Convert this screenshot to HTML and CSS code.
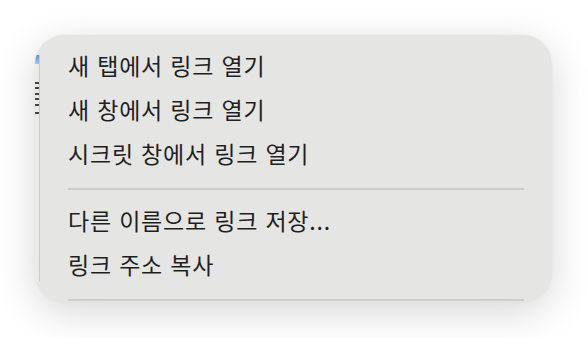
FILE: index.html
```html
<!DOCTYPE html>
<html lang="ko">
<head>
<meta charset="utf-8">
<link rel="stylesheet" href="styles.css">
</head>
<body>
<div class="stage">
  <div class="menu">
    <div class="edge">
      <span class="edge-blue"></span>
      <span class="dash d1"></span>
      <span class="dash d2"></span>
      <span class="dash d3"></span>
      <span class="dash d4"></span>
      <span class="dash d5"></span>
      <span class="dash d6"></span>
    </div>
    <div class="item">새 탭에서 링크 열기</div>
    <div class="item">새 창에서 링크 열기</div>
    <div class="item">시크릿 창에서 링크 열기</div>
    <div class="sep"></div>
    <div class="item">다른 이름으로 링크 저장...</div>
    <div class="item">링크 주소 복사</div>
    <div class="sep"></div>
  </div>
</div>
</body>
</html>
```
FILE: styles.css
```css
html, body {
  margin: 0;
  padding: 0;
  background: #ffffff;
}
body {
  width: 588px;
  height: 338px;
  overflow: hidden;
  font-family: "Noto Sans CJK KR", "Noto Sans", sans-serif;
}
.stage {
  padding: 35px 0 0 35px;
}
.menu {
  position: relative;
  width: 517px;
  height: 267px;
  box-sizing: border-box;
  padding-top: 10px;
  background: #e5e5e4;
  border-radius: 29px;
  overflow: hidden;
  box-shadow: 0 10px 40px rgba(0, 0, 0, 0.16), 0 0 3px rgba(0, 0, 0, 0.04);
}
.item {
  height: 44px;
  line-height: 40px;
  padding-left: 33px;
  font-size: 23px;
  letter-spacing: 0.8px;
  color: #1f1f1f;
  white-space: nowrap;
}
.sep {
  height: 2px;
  margin: 11px 28px 10px 33px;
  background: #cdcdcc;
}
.edge {
  position: absolute;
  left: 0;
  top: 20px;
  width: 4px;
  height: 226px;
  background: #ebebea;
  border-right: 1px solid #c9c9c8;
}
.edge-blue {
  position: absolute;
  left: 0;
  top: 0;
  width: 4px;
  height: 9px;
  background: linear-gradient(#5c8fd8, #a9c6ec);
}
.dash {
  position: absolute;
  left: 0;
  width: 4px;
  height: 2px;
  background: #444;
}
.d1 { top: 27px; }
.d2 { top: 32px; }
.d3 { top: 38px; }
.d4 { top: 43px; }
.d5 { top: 49px; }
.d6 { top: 57px; }
```
